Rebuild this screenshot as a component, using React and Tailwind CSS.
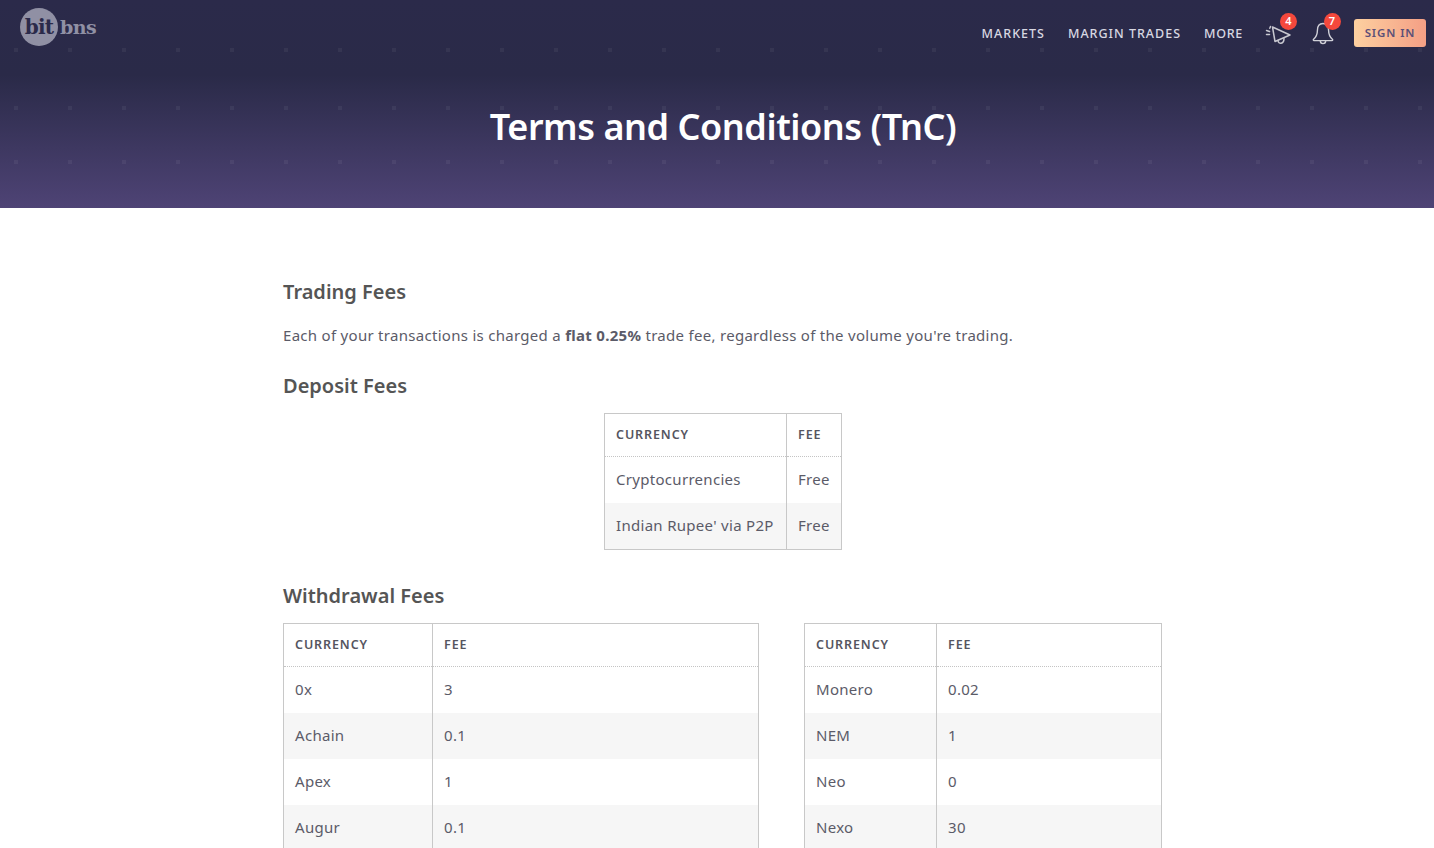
import React from "react";

function Table({ rows, widths, lastTall = false }) {
  return (
    <table className="border-collapse border border-[#c8c8c8] table-fixed text-[15px] text-[#5b5b68]">
      <colgroup>
        <col className={widths[0]} />
        <col className={widths[1]} />
      </colgroup>
      <thead>
        <tr className="h-[43px] border-b border-dotted border-b-[#c4c4c4]">
          <th className="border-r border-[#c8c8c8] pl-[11px] pr-0 text-left text-[12.5px] font-semibold tracking-[0.9px] text-[#55555f]">CURRENCY</th>
          <th className="pl-[11px] pr-0 text-left text-[12.5px] font-semibold tracking-[0.9px] text-[#55555f]">FEE</th>
        </tr>
      </thead>
      <tbody>
        {rows.map((r, i) => (
          <tr key={i} className={`${i % 2 === 1 ? "bg-[#f6f6f6]" : "bg-white"} ${lastTall && i === rows.length - 1 ? "h-[47px]" : "h-[46px]"}`}>
            <td className="border-r border-[#c8c8c8] pb-[1px] pl-[11px] pr-0 tracking-[0.3px] whitespace-nowrap">{r[0]}</td>
            <td className="pb-[1px] pl-[11px] pr-0 tracking-[0.3px]">{r[1]}</td>
          </tr>
        ))}
      </tbody>
    </table>
  );
}

function Megaphone() {
  return (
    <svg width="28" height="24" viewBox="0 0 28 24" fill="none" stroke="#c8c8d0" strokeWidth="1.5" strokeLinecap="round" strokeLinejoin="round" className="block">
      <path d="M7.5 4 L25 12 L10 18.5 Z" />
      <path d="M13 17.5 C13.2 21.5 19 21.5 19 15.5" />
      <path d="M5.5 3.5 L4.8 5.2" />
      <path d="M1.5 7.5 L4.5 8.5" />
      <path d="M1.5 11.5 L4.5 11.5" />
    </svg>
  );
}

function Bell() {
  return (
    <svg width="22" height="24" viewBox="0 0 22 24" fill="none" stroke="#d0d0d8" strokeWidth="1.4" strokeLinecap="round" strokeLinejoin="round" className="block">
      <path d="M11 1.5 C6.8 1.5 5.4 5 5.4 8.5 C5.4 12.5 4.2 15 1.6 17.2 C1 17.8 1.3 18.6 2 18.6 L20 18.6 C20.7 18.6 21 17.8 20.4 17.2 C17.8 15 16.6 12.5 16.6 8.5 C16.6 5 15.2 1.5 11 1.5 Z" />
      <path d="M8.3 18.8 C8.3 22.6 13.7 22.6 13.7 18.8" />
    </svg>
  );
}

function Badge({ children, className }) {
  return (
    <span className={`absolute flex h-[17px] w-[17px] items-center justify-center rounded-full bg-[#f4483c] text-[11px] font-semibold tracking-normal text-white ${className}`}>
      {children}
    </span>
  );
}

export default function App() {
  return (
    <div className="h-[848px] overflow-hidden bg-white font-['Noto_Sans',sans-serif]">
      <header className="relative h-[208px] bg-[linear-gradient(180deg,#2b2a4a_0%,#2a2a48_36%,#4e4375_100%)]">
        <svg className="absolute left-0 top-0 h-[60px] w-full" aria-hidden="true">
          <defs>
            <pattern id="dotsNav" x="14" y="48" width="54" height="54" patternUnits="userSpaceOnUse">
              <rect width="4" height="4" fill="#ffffff" fillOpacity="0.05" />
            </pattern>
          </defs>
          <rect width="100%" height="100%" fill="url(#dotsNav)" />
        </svg>
        <svg className="absolute left-0 top-[60px] h-[148px] w-full" aria-hidden="true">
          <defs>
            <pattern id="dotsHero" x="14" y="46" width="54" height="54" patternUnits="userSpaceOnUse">
              <rect width="4" height="4" fill="#ffffff" fillOpacity="0.05" />
            </pattern>
          </defs>
          <rect width="100%" height="100%" fill="url(#dotsHero)" />
        </svg>
        <nav className="relative flex h-[66px] items-start justify-between pl-[20px] pr-[8px]">
          <div className="flex items-center pt-[8px]">
            <div className="flex h-[38px] w-[38px] items-center justify-center rounded-full bg-[#9090a4] font-['DejaVu_Serif',serif] text-[20px] font-bold leading-none tracking-[-0.7px] text-[#2b2a4a]">bit</div>
            <span className="ml-[2px] font-['DejaVu_Serif',serif] text-[19px] font-bold leading-none tracking-[-0.6px] text-[#9090a4]">bns</span>
          </div>
          <div className="flex items-center pt-[19px] text-[12.5px] font-medium tracking-[1px] text-[#d8d8e2]">
            <a className="mr-[23px] pt-[2px]">MARKETS</a>
            <a className="mr-[23px] pt-[2px]">MARGIN TRADES</a>
            <a className="mr-[22px] pt-[2px] tracking-[0.7px]">MORE</a>
            <div className="relative mr-[19px] h-[28px] w-[28px] pt-[4px]">
              <Megaphone />
              <Badge className="left-[15px] top-[-6px]">4</Badge>
            </div>
            <div className="relative mr-[20px] h-[28px] w-[22px] pt-[3px]">
              <Bell />
              <Badge className="left-[11.5px] top-[-6px]">7</Badge>
            </div>
            <button className="h-[28px] w-[72px] rounded-[3px] bg-[linear-gradient(90deg,#fdd0a0,#f49f85)] text-[11.5px] font-semibold tracking-[0.9px] text-[#5b5078]">SIGN IN</button>
          </div>
        </nav>
        <h1 className="relative ml-[283px] mt-[36px] w-[880px] text-center text-[36px] font-semibold leading-[50px] tracking-[-0.45px] text-white">Terms and Conditions (TnC)</h1>
      </header>

      <main className="ml-[283px] w-[880px] pt-[70px] text-[#5b5b68]">
        <h2 className="text-[20px] font-semibold leading-[28px] text-[#555555]">Trading Fees</h2>
        <p className="mt-[17px] text-[15px] leading-[24px] tracking-[0.29px]">
          Each of your transactions is charged a <strong className="font-bold">flat 0.25%</strong> trade fee, regardless of the volume you're trading.
        </p>
        <h2 className="mt-[25px] text-[20px] font-semibold leading-[28px] text-[#555555]">Deposit Fees</h2>
        <div className="mt-[13px] flex justify-center">
          <Table lastTall widths={["w-[182px]", "w-[55px]"]} rows={[["Cryptocurrencies", "Free"], ["Indian Rupee' via P2P", "Free"]]} />
        </div>
        <h2 className="mt-[32px] text-[20px] font-semibold leading-[28px] text-[#555555]">Withdrawal Fees</h2>
        <div className="mt-[13px] flex items-start gap-[45px]">
          <Table widths={["w-[149px]", "w-[326px]"]} rows={[["0x", "3"], ["Achain", "0.1"], ["Apex", "1"], ["Augur", "0.1"]]} />
          <Table widths={["w-[132px]", "w-[225px]"]} rows={[["Monero", "0.02"], ["NEM", "1"], ["Neo", "0"], ["Nexo", "30"]]} />
        </div>
      </main>
    </div>
  );
}
